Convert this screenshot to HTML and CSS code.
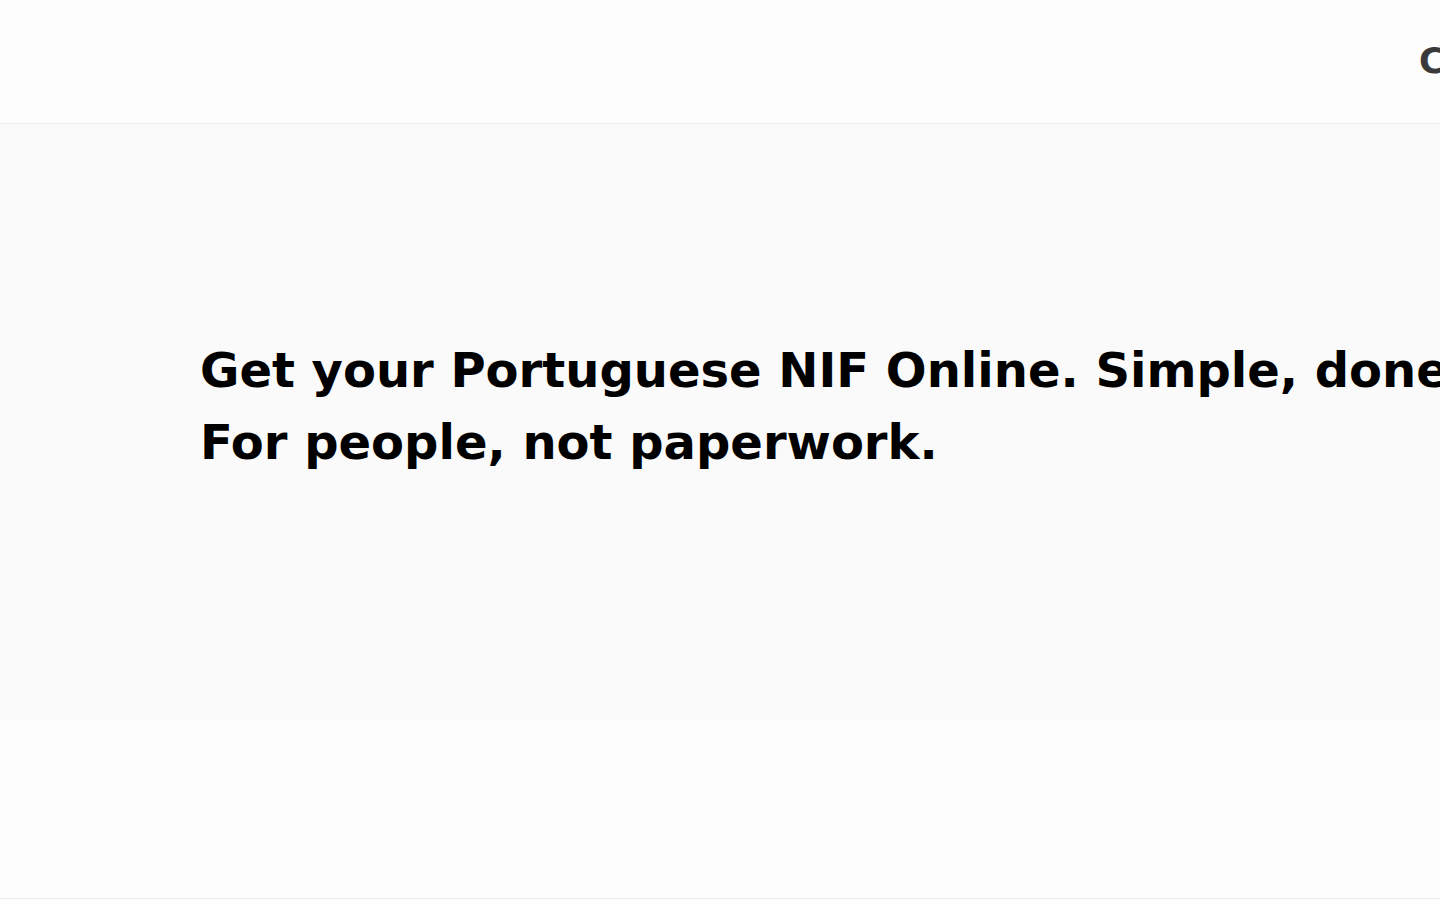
FILE: index.html
```html
<!DOCTYPE html>
<html lang="en">
<head>
<meta charset="utf-8">
<title>Portuguese NIF Online</title>
<link rel="stylesheet" href="styles.css">
</head>
<body>
<header class="site-header">
  <nav class="nav"><span class="nav-link">Contact</span></nav>
</header>
<main>
  <section class="hero">
    <h1 class="hero-title">Get your Portuguese NIF Online. Simple, done right.<br>For people, not paperwork.</h1>
  </section>
  <section class="spacer"></section>
</main>
<footer class="site-footer"></footer>
</body>
</html>
```
FILE: styles.css
```css
html, body {
  margin: 0;
  padding: 0;
}
body {
  background: #fdfdfd;
  font-family: "DejaVu Sans", sans-serif;
  color: #000;
  width: 1440px;
  overflow: hidden;
}
.site-header {
  height: 123px;
  border-bottom: 1px solid #ededed;
  display: flex;
  align-items: center;
  padding-left: 1419px;
  box-sizing: content-box;
  white-space: nowrap;
  overflow: hidden;
}
.nav {
  display: flex;
}
.nav-link {
  font-size: 35px;
  font-weight: 600;
  color: #3a3a3a;
  line-height: 1;
}
.hero {
  background: #fafafa;
  height: 596px;
  box-sizing: border-box;
  padding: 210px 0 0 200px;
  white-space: nowrap;
  overflow: hidden;
}
.hero-title {
  margin: 0;
  font-size: 48px;
  line-height: 72px;
  font-weight: bold;
  letter-spacing: 0;
}
.spacer {
  height: 178px;
}
.site-footer {
  border-top: 1px solid #ececec;
  height: 40px;
}
```
